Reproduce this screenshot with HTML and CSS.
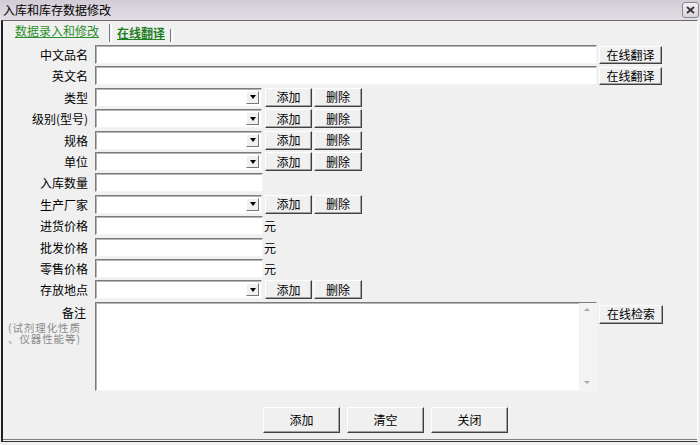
FILE: index.html
```html
<!DOCTYPE html>
<html lang="zh">
<head>
<meta charset="utf-8">
<title>入库和库存数据修改</title>
<link rel="stylesheet" href="styles.css">
</head>
<body>
<div class="titlebar">
  <span class="title">入库和库存数据修改</span>
  <span class="close"><svg width="9" height="8" viewBox="0 0 9 8"><path d="M1 1 L8 7 M8 1 L1 7" stroke="#333" stroke-width="1.8" fill="none"/></svg></span>
</div>
<div class="frame">
  <div class="tabs">
    <span class="tab tab1">数据录入和修改</span>
    <span class="sep sep1"></span>
    <span class="tab tab2">在线翻译</span>
    <span class="sep sep2"></span>
  </div>
  <div class="form">
    <div class="row"><span class="label">中文品名</span><span class="field wide"></span><button class="btn btn-side">在线翻译</button></div>
    <div class="row"><span class="label">英文名</span><span class="field wide"></span><button class="btn btn-side">在线翻译</button></div>
    <div class="row"><span class="label">类型</span><span class="field combo"><span class="drop"><span class="tri"></span></span></span><button class="btn btn-add">添加</button><button class="btn btn-del">删除</button></div>
    <div class="row"><span class="label">级别(型号)</span><span class="field combo"><span class="drop"><span class="tri"></span></span></span><button class="btn btn-add">添加</button><button class="btn btn-del">删除</button></div>
    <div class="row"><span class="label">规格</span><span class="field combo"><span class="drop"><span class="tri"></span></span></span><button class="btn btn-add">添加</button><button class="btn btn-del">删除</button></div>
    <div class="row"><span class="label">单位</span><span class="field combo"><span class="drop"><span class="tri"></span></span></span><button class="btn btn-add">添加</button><button class="btn btn-del">删除</button></div>
    <div class="row"><span class="label">入库数量</span><span class="field short"></span></div>
    <div class="row"><span class="label">生产厂家</span><span class="field combo"><span class="drop"><span class="tri"></span></span></span><button class="btn btn-add">添加</button><button class="btn btn-del">删除</button></div>
    <div class="row"><span class="label">进货价格</span><span class="field short"></span><span class="unit">元</span></div>
    <div class="row"><span class="label">批发价格</span><span class="field short"></span><span class="unit">元</span></div>
    <div class="row"><span class="label">零售价格</span><span class="field short"></span><span class="unit">元</span></div>
    <div class="row"><span class="label">存放地点</span><span class="field combo"><span class="drop"><span class="tri"></span></span></span><button class="btn btn-add">添加</button><button class="btn btn-del">删除</button></div>
    <div class="row memo-row">
      <div class="memo-label">
        <span class="label-text">备注</span>
        <span class="note">(试剂理化性质</span>
        <span class="note">、仪器性能等)</span>
      </div>
      <div class="field memo"><div class="vscroll"><span class="up"></span><span class="down"></span></div></div>
      <button class="btn btn-search">在线检索</button>
    </div>
  </div>
  <div class="footer">
    <button class="btn btn-big">添加</button>
    <button class="btn btn-big">清空</button>
    <button class="btn btn-big">关闭</button>
  </div>
</div>
</body>
</html>
```
FILE: styles.css
```css
html, body {
  margin: 0;
  padding: 0;
}
body {
  width: 700px;
  height: 445px;
  overflow: hidden;
  background: #f0f0f0;
  font-family: "Noto Sans CJK SC", "Liberation Sans", sans-serif;
  font-size: 12px;
  color: #000;
}
.titlebar {
  height: 20px;
  display: flex;
  align-items: center;
  justify-content: space-between;
  padding-left: 3px;
  box-sizing: border-box;
  background: linear-gradient(#d3ccd6, #e2dde4);
}
.title {
  line-height: 20px;
  font-size: 12px;
}
.close {
  width: 17px;
  height: 16px;
  margin-right: 1px;
  box-sizing: border-box;
  border: 1px solid #8c8890;
  border-radius: 3px;
  background: linear-gradient(#f2f0f3, #d9d5db);
  display: flex;
  align-items: center;
  justify-content: center;
}
.frame {
  margin-left: 1px;
  width: 697px;
  height: 422px;
  box-sizing: border-box;
  border-top: 1px solid #6a6a6a;
  border-left: 2px solid #222;
  border-right: 1px solid #fff;
  border-bottom: 1px solid #333;
  box-shadow: inset 0 -1px 0 #f0f0f0, inset 0 -2px 0 #808080;
  background: #f0f0f0;
}
.tabs {
  height: 24px;
  display: flex;
  align-items: flex-start;
}
.tab {
  line-height: 14px;
  color: #2b8f2b;
  text-decoration: underline;
  text-underline-offset: 1px;
}
.tab1 {
  margin-left: 12px;
  margin-top: 3px;
}
.tab2 {
  margin-left: 5px;
  margin-top: 5px;
  font-weight: bold;
  color: #1f7f1f;
}
.sep {
  width: 1px;
  border-left: 1px solid #7a7a7a;
  border-right: 1px solid #fff;
}
.sep1 {
  margin-left: 10px;
  margin-top: 3px;
  height: 18px;
}
.sep2 {
  margin-left: 5px;
  margin-top: 8px;
  height: 13px;
}
.form {
  display: flex;
  flex-direction: column;
  gap: 2.42px;
}
.row {
  height: 19px;
  display: flex;
  align-items: flex-start;
}
.label {
  width: 92px;
  box-sizing: border-box;
  padding-right: 7px;
  text-align: right;
  line-height: 19px;
  white-space: nowrap;
}
.field {
  display: block;
  height: 19px;
  box-sizing: border-box;
  background: #fff;
  border: 1px solid;
  border-color: #7b7b7b #f4f4f4 #f4f4f4 #7b7b7b;
  box-shadow: inset 1px 1px 0 #b4b4b4;
  position: relative;
}
.wide {
  width: 502px;
}
.combo {
  width: 167px;
}
.short {
  width: 168px;
}
.unit {
  margin-left: 1px;
  line-height: 19px;
}
.drop {
  position: absolute;
  right: 2px;
  top: 2px;
  width: 13px;
  height: 13px;
  box-sizing: border-box;
  background: #f0f0f0;
  border: 1px solid;
  border-color: #fff #777 #777 #fff;
  display: flex;
  align-items: center;
  justify-content: center;
}
.tri {
  width: 0;
  height: 0;
  border-left: 3.5px solid transparent;
  border-right: 3.5px solid transparent;
  border-top: 4px solid #000;
}
.btn {
  height: 19px;
  box-sizing: border-box;
  padding: 0;
  margin: 0;
  background: #f0f0f0;
  border: 1px solid;
  border-color: #fff #404040 #404040 #fff;
  box-shadow: inset -1px -1px 0 #a0a0a0;
  font-family: "Noto Sans CJK SC", "Liberation Sans", sans-serif;
  font-size: 12px;
  line-height: 16px;
  color: #000;
}
.btn-side {
  width: 63px;
  height: 18px;
  margin-left: 2px;
  margin-top: 1px;
}
.btn-add {
  width: 47px;
  margin-left: 3px;
}
.btn-del {
  width: 48px;
  margin-left: 2px;
}
.memo-row {
  height: 89px;
}
.memo-label {
  width: 92px;
  display: flex;
  flex-direction: column;
}
.label-text {
  text-align: right;
  padding-right: 9px;
  line-height: 19px;
  padding-top: 1px;
}
.note {
  display: block;
  height: 11px;
  margin-left: 5px;
  font-size: 10.5px;
  line-height: 11px;
  letter-spacing: 0.9px;
  color: #8a8a8a;
  white-space: nowrap;
  overflow: visible;
}
.note:first-of-type {
  margin-top: 5px;
}
.memo {
  width: 502px;
  height: 89px;
}
.vscroll {
  position: absolute;
  right: 0;
  top: 0;
  bottom: 0;
  width: 17px;
  background: #f3f3f3;
}
.up, .down {
  position: absolute;
  left: 5px;
  width: 0;
  height: 0;
  border-left: 3px solid transparent;
  border-right: 3px solid transparent;
}
.up {
  top: 5px;
  border-bottom: 3px solid #a8a8a8;
}
.down {
  bottom: 6px;
  border-top: 3px solid #a8a8a8;
}
.btn-search {
  width: 64px;
  margin-left: 2px;
  margin-top: 3px;
}
.footer {
  display: flex;
  gap: 7px;
  padding-left: 260px;
  margin-top: 16px;
}
.btn-big {
  width: 77px;
  height: 26px;
  line-height: 22px;
}
```
